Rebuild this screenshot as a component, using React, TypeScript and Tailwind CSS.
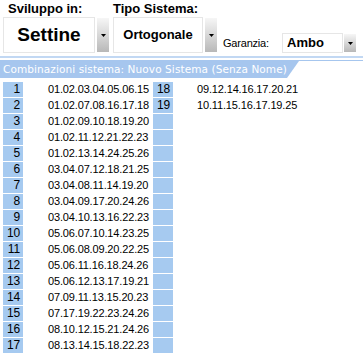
import React from 'react';

const left = [
  '01.02.03.04.05.06.15',
  '01.02.07.08.16.17.18',
  '01.02.09.10.18.19.20',
  '01.02.11.12.21.22.23',
  '01.02.13.14.24.25.26',
  '03.04.07.12.18.21.25',
  '03.04.08.11.14.19.20',
  '03.04.09.17.20.24.26',
  '03.04.10.13.16.22.23',
  '05.06.07.10.14.23.25',
  '05.06.08.09.20.22.25',
  '05.06.11.16.18.24.26',
  '05.06.12.13.17.19.21',
  '07.09.11.13.15.20.23',
  '07.17.19.22.23.24.26',
  '08.10.12.15.21.24.26',
  '08.13.14.15.18.22.23',
];

const right = ['09.12.14.16.17.20.21', '10.11.15.16.17.19.25'];

const DropButton: React.FC<{ className?: string }> = ({ className = '' }) => (
  <div
    className={`w-[12px] flex items-center justify-center bg-gradient-to-b from-[#f6f6f6] via-[#d8d8d8] to-[#b8b8b8] ${className}`}
  >
    <svg width="5" height="3" viewBox="0 0 5 3">
      <path d="M0 0h5L2.5 3z" fill="#000" />
    </svg>
  </div>
);

const App: React.FC = () => {
  return (
    <div className="w-[363px] h-[353px] bg-white overflow-hidden font-['Liberation_Sans',Arial,sans-serif] text-black">
      {/* selettori */}
      <div className="flex h-[56px]">
        <div className="ml-[3px] w-[106px] flex flex-col">
          <div className="pl-[5px] h-[17px] text-[13px] font-bold leading-[17px]">Sviluppo in:</div>
          <div className="flex h-[36px] gap-[2px]">
            <div className="w-[92px] border border-[#e6e6e6] flex items-center justify-center text-[19px] font-bold">
              Settine
            </div>
            <DropButton className="my-[1px]" />
          </div>
        </div>
        <div className="ml-[4px] w-[106px] flex flex-col">
          <div className="h-[17px] text-[13px] font-bold leading-[17px]">Tipo Sistema:</div>
          <div className="flex h-[36px] gap-[2px]">
            <div className="w-[90px] border border-[#e6e6e6] flex items-center justify-center text-[13px] font-bold">
              Ortogonale
            </div>
            <DropButton className="my-[1px]" />
          </div>
        </div>
        <div className="ml-[4px] flex items-end pb-[3px]">
          <div className="w-[59px] h-[20px] flex items-center text-[11px] tracking-[-0.2px]">Garanzia:</div>
          <div className="flex h-[20px] gap-[1px]">
            <div className="w-[61px] border border-[#e6e6e6] flex items-center pl-[4px] text-[13px] font-bold">
              Ambo
            </div>
            <DropButton className="my-[1px]" />
          </div>
        </div>
      </div>

      {/* intestazione */}
      <div className="h-[2px] bg-[#c2d8f3]" />
      <div className="h-[2px]" />
      <div className="flex h-[18px] border-t border-[#a6c6ee]">
        <div className="w-[287px] bg-[#a6c6ee] text-white text-[10.5px] tracking-[0.1px] leading-[17px] pl-[3px] font-['DejaVu_Sans',Verdana,sans-serif] whitespace-nowrap">
          Combinazioni sistema: Nuovo Sistema (Senza Nome)
        </div>
        <svg width="12" height="17" viewBox="0 0 12 17" className="block">
          <path d="M0 0H12L0 17z" fill="#a6c6ee" />
        </svg>
      </div>

      {/* combinazioni */}
      <div className="flex mt-[4px] text-[11px] tracking-[-0.15px]">
        <div className="flex flex-col">
          {left.map((c, i) => (
            <div key={c} className="flex h-[16px] items-start">
              <div className="ml-[3px] w-[20px] h-[15px] bg-[#a6caf0] text-right pr-[3px] leading-[15px] text-[12px]">
                {i + 1}
              </div>
              <div className="w-[130px] pl-[25px] leading-[15px]">{c}</div>
            </div>
          ))}
        </div>
        <div className="flex flex-col">
          {left.map((_, i) => (
            <div key={i} className="flex h-[16px] items-start">
              <div className="w-[20px] h-[15px] bg-[#a6caf0] text-right pr-[3px] leading-[15px] text-[12px]">
                {i < right.length ? i + 18 : ''}
              </div>
              <div className="pl-[24px] leading-[15px]">{right[i] ?? ''}</div>
            </div>
          ))}
        </div>
      </div>
    </div>
  );
};

export default App;
